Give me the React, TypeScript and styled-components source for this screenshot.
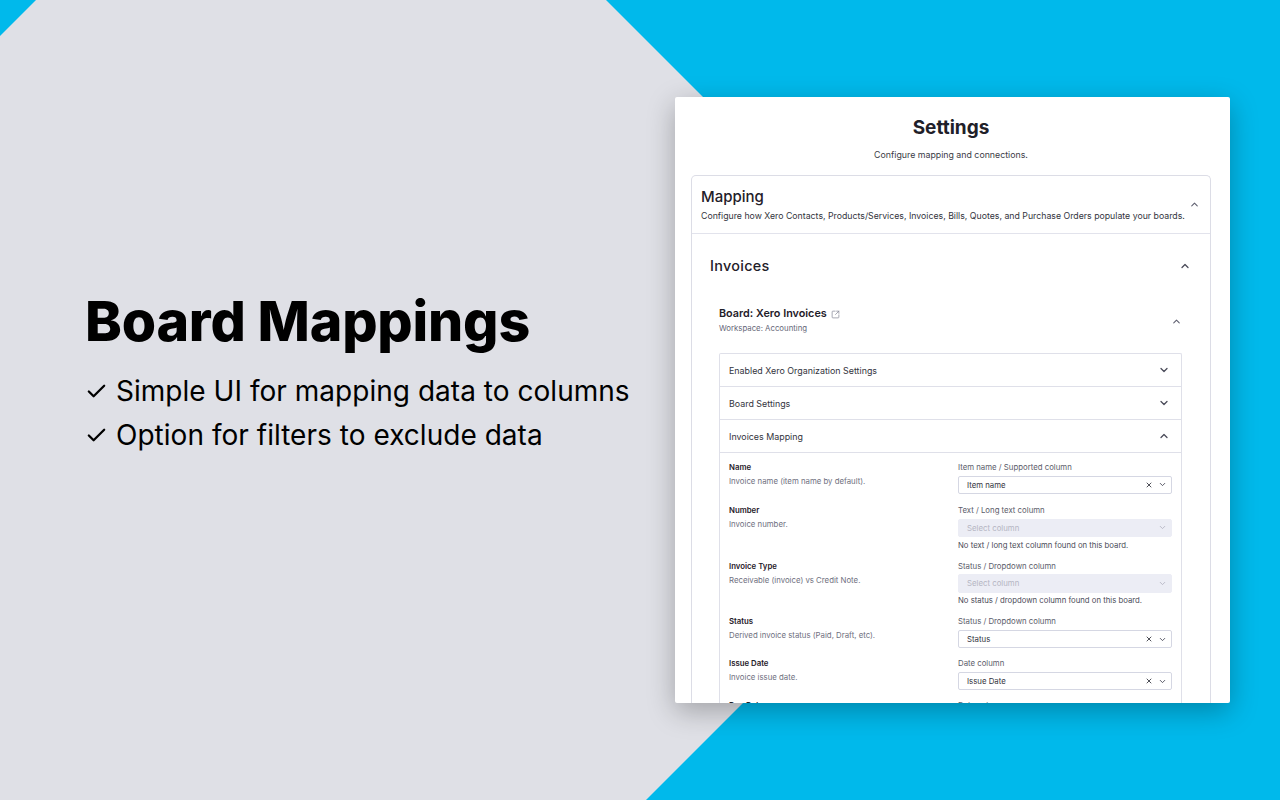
import React from 'react';
import styled, { createGlobalStyle } from 'styled-components';
import { Check, ChevronDown, ChevronUp, X, SquareArrowOutUpRight } from 'lucide-react';

const Global = createGlobalStyle`
  html, body { margin: 0; padding: 0; }
  body { font-family: "Inter", sans-serif; }
`;

const Page = styled.div`
  position: relative;
  width: 1280px;
  height: 800px;
  overflow: hidden;
  background: #00b9eb;
  display: flex;
  align-items: center;
  &::before {
    content: "";
    position: absolute;
    inset: 0;
    background: #dfe0e6;
    clip-path: polygon(36px 0, 606px 0, 1026px 420px, 646px 800px, 0 800px, 0 36px);
  }
`;

const Intro = styled.section`
  position: relative;
  width: 675px;
  flex: none;
  box-sizing: border-box;
  padding: 0 0 60px 85px;
  color: #000;
`;

const Headline = styled.h1`
  margin: 0 0 20px;
  font: 800 55.5px/66px "Inter", sans-serif;
  letter-spacing: -0.2px;
`;

const Points = styled.ul`
  list-style: none;
  margin: 0;
  padding: 0;
  display: flex;
  flex-direction: column;
  gap: 10px;
`;

const Point = styled.li`
  display: flex;
  align-items: center;
  gap: 8px;
  font: 400 28px/34px "Inter", sans-serif;
  letter-spacing: 0.03px;
  svg { width: 23px; height: 23px; flex: none; }
`;

const Card = styled.main`
  position: relative;
  width: 555px;
  height: 606px;
  flex: none;
  box-sizing: border-box;
  overflow: hidden;
  padding: 19px 19px 0 16px;
  background: #fff;
  border-radius: 2px;
  box-shadow: 0 8px 28px rgba(0, 0, 0, 0.28);
  color: #1f2029;
  font-family: "Inter", sans-serif;
`;

const CardTitle = styled.h2`
  margin: 0;
  text-align: center;
  font: 700 19px/24px "Inter", sans-serif;
`;

const CardSub = styled.p`
  margin: 8px 0 13px;
  text-align: center;
  font-size: 8.8px;
  line-height: 14px;
  color: #3b3c46;
`;

const Panel = styled.div`
  border: 1px solid #dcdde6;
  border-bottom: 0;
  border-radius: 5px 5px 0 0;
  height: 540px;
`;

const PanelHead = styled.header`
  display: flex;
  align-items: center;
  justify-content: space-between;
  height: 58px;
  box-sizing: border-box;
  padding: 0 10px 0 9px;
  border-bottom: 1px solid #e2e3ec;
`;

const PanelTitle = styled.div`
  font: 500 15px/20px "Inter", sans-serif;
`;

const PanelDesc = styled.div`
  font-size: 8.75px;
  line-height: 14px;
  margin-top: 2px;
  white-space: nowrap;
  color: #33343d;
`;

const Section = styled.div`
  padding: 20px 19px 0 18px;
`;

const SectionHead = styled.div`
  display: flex;
  align-items: center;
  justify-content: space-between;
  height: 24px;
  font: 500 14.4px/24px "Inter", sans-serif;
  letter-spacing: 0.3px;
`;

const BoardHead = styled.div`
  display: flex;
  align-items: center;
  justify-content: space-between;
  margin: 29px 9px 0 9px;
`;

const BoardTitle = styled.div`
  display: flex;
  align-items: center;
  gap: 4px;
  font: 600 10.8px/14px "Inter", sans-serif;
`;

const Workspace = styled.div`
  margin-top: 1px;
  font-size: 7.8px;
  line-height: 13px;
  color: #676879;
`;

const Accordion = styled.div`
  margin: 18px 9px 0 9px;
  border: 1.2px solid #dfe0e9;
  border-bottom: 0;
  border-radius: 2px 2px 0 0;
  height: 360px;
`;

const AccordionRow = styled.div`
  display: flex;
  align-items: center;
  justify-content: space-between;
  height: 32px;
  padding: 0 11px 0 9px;
  border-bottom: 1.2px solid #dfe0e9;
  font-size: 8.9px;
  color: #33343d;
`;

const Fields = styled.div`
  padding: 8px 9px 0 9px;
`;

const Field = styled.div<{ $note?: boolean; $first?: boolean }>`
  display: grid;
  grid-template-columns: 229px 214px;
  height: ${p => (p.$first ? 43 : p.$note ? 55.7 : 42)}px;
`;

const FieldName = styled.div`
  font-size: 7.8px;
  line-height: 12px;
  font-weight: 600;
  color: #1f2029;
`;

const FieldDesc = styled.div`
  margin-top: 2px;
  font-size: 7.8px;
  line-height: 12px;
  color: #6f7080;
`;

const ColumnLabel = styled.div`
  font-size: 7.8px;
  line-height: 12px;
  color: #5c5d6b;
`;

const Select = styled.div<{ $disabled?: boolean }>`
  display: flex;
  align-items: center;
  gap: 5px;
  height: 18.5px;
  box-sizing: border-box;
  margin-top: 2.5px;
  padding: 0 4px 0 8px;
  border-radius: 2px;
  font-size: 7.8px;
  border: 1px solid ${p => (p.$disabled ? '#ecedf5' : '#d5d7e3')};
  background: ${p => (p.$disabled ? '#ecedf5' : '#fff')};
  color: ${p => (p.$disabled ? '#b5b6c3' : '#33343d')};
`;

const SelectValue = styled.span`
  flex: 1;
`;

const Note = styled.div`
  margin-top: 1.5px;
  font-size: 7.75px;
  line-height: 12px;
  color: #4a4b57;
`;

type Row = { name: string; desc: string; label: string; value?: string; note?: string };

const rows: Row[] = [
  { name: 'Name', desc: 'Invoice name (item name by default).', label: 'Item name / Supported column', value: 'Item name' },
  { name: 'Number', desc: 'Invoice number.', label: 'Text / Long text column', note: 'No text / long text column found on this board.' },
  { name: 'Invoice Type', desc: 'Receivable (invoice) vs Credit Note.', label: 'Status / Dropdown column', note: 'No status / dropdown column found on this board.' },
  { name: 'Status', desc: 'Derived invoice status (Paid, Draft, etc).', label: 'Status / Dropdown column', value: 'Status' },
  { name: 'Issue Date', desc: 'Invoice issue date.', label: 'Date column', value: 'Issue Date' },
  { name: 'Due Date', desc: 'Invoice due date.', label: 'Date column', value: 'Due Date' },
];

export default function App() {
  return (
    <Page>
      <Global />
      <Intro>
        <Headline>Board Mappings</Headline>
        <Points>
          <Point><Check strokeWidth={2.4} />Simple UI for mapping data to columns</Point>
          <Point><Check strokeWidth={2.4} />Option for filters to exclude data</Point>
        </Points>
      </Intro>
      <Card>
        <CardTitle>Settings</CardTitle>
        <CardSub>Configure mapping and connections.</CardSub>
        <Panel>
          <PanelHead>
            <div>
              <PanelTitle>Mapping</PanelTitle>
              <PanelDesc>Configure how Xero Contacts, Products/Services, Invoices, Bills, Quotes, and Purchase Orders populate your boards.</PanelDesc>
            </div>
            <ChevronUp size={11} color="#5f6070" strokeWidth={2.4} />
          </PanelHead>
          <Section>
            <SectionHead>Invoices<ChevronUp size={12} color="#4b4c5a" strokeWidth={2.6} /></SectionHead>
            <BoardHead>
              <div>
                <BoardTitle>Board: Xero Invoices <SquareArrowOutUpRight size={9} color="#8a8b99" /></BoardTitle>
                <Workspace>Workspace: Accounting</Workspace>
              </div>
              <ChevronUp size={11} color="#5f6070" strokeWidth={2.4} />
            </BoardHead>
            <Accordion>
              <AccordionRow>Enabled Xero Organization Settings<ChevronDown size={12} color="#4b4c5a" strokeWidth={2.6} /></AccordionRow>
              <AccordionRow>Board Settings<ChevronDown size={12} color="#4b4c5a" strokeWidth={2.6} /></AccordionRow>
              <AccordionRow>Invoices Mapping<ChevronUp size={12} color="#4b4c5a" strokeWidth={2.6} /></AccordionRow>
              <Fields>
                {rows.map((r, i) => (
                  <Field key={r.name} $note={!!r.note} $first={i === 0}>
                    <div>
                      <FieldName>{r.name}</FieldName>
                      <FieldDesc>{r.desc}</FieldDesc>
                    </div>
                    <div>
                      <ColumnLabel>{r.label}</ColumnLabel>
                      <Select $disabled={!r.value}>
                        <SelectValue>{r.value ?? 'Select column'}</SelectValue>
                        {r.value && <X size={8} color="#33343d" strokeWidth={2.6} />}
                        <ChevronDown size={9} color={r.value ? '#4b4c5a' : '#b5b6c3'} strokeWidth={2.4} />
                      </Select>
                      {r.note && <Note>{r.note}</Note>}
                    </div>
                  </Field>
                ))}
              </Fields>
            </Accordion>
          </Section>
        </Panel>
      </Card>
    </Page>
  );
}
